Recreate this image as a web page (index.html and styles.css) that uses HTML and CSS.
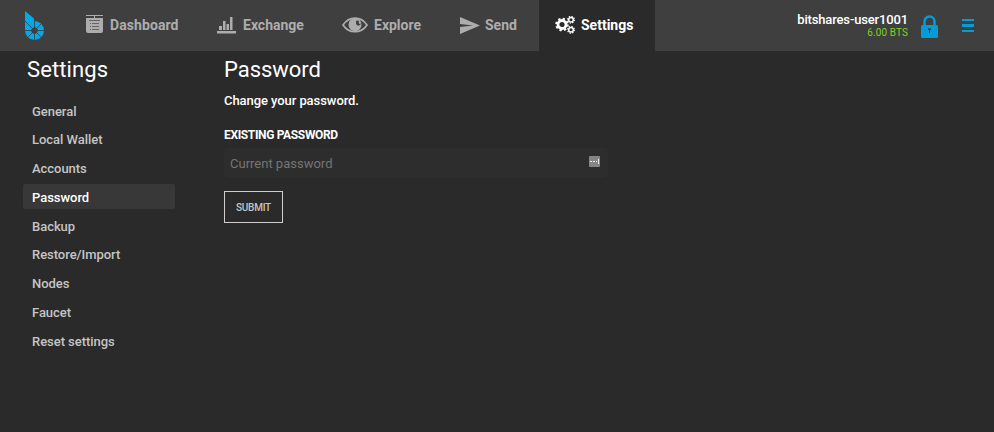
FILE: index.html
```html
<!DOCTYPE html>
<html lang="en">
<head>
<meta charset="utf-8">
<title>Settings</title>
<link rel="stylesheet" href="styles.css">
</head>
<body>
<header class="header">
  <a class="logo">
    <svg width="20" height="30" viewBox="0 0 20 30">
      <circle cx="9.500" cy="19.500" r="6.300" fill="none" stroke="#00a9e9" stroke-width="6.400"/>
      <path fill="#00a9e9" d="M0 0L9 7.500V16.500L7 17.500L0 18.500Z"/>
      <path d="M9.500 8V30M0 19.500H20M9.500 19.500L0 10M9.500 19.500L17 12M9.500 19.500L2 27M9.500 19.500L17 27" stroke="#3f3f3f" stroke-width=".8"/>
      <circle cx="9.500" cy="19.500" r="3" fill="#3f3f3f"/>
    </svg>
  </a>
  <nav class="nav">
    <a class="tab dashboard">
      <svg width="18" height="18" viewBox="0 0 18 18"><path fill="#adadad" d="M0 0H17V1H0ZM0 3H8V1H9V3H17V16Q17 18 15 18H2Q0 18 0 16Z"/><path d="M3 5.500H14M4 8.500H5M6 8.500H13M4 11.500H5M6 11.500H13M4 14.500H5M6 14.500H13" stroke="#656565"/></svg>
      <span>Dashboard</span>
    </a>
    <a class="tab exchange">
      <svg width="19" height="17" viewBox="0 0 19 17"><path fill="#adadad" d="M2 9H5V13H2ZM6 4H8.500V13H6ZM9.500 7H12V13H9.500ZM13 0H15.500V13H13ZM0 14H19V16.500H0Z"/></svg>
      <span>Exchange</span>
    </a>
    <a class="tab explore">
      <svg width="26" height="16" viewBox="0 0 26 16"><path d="M1 8C7-1.300 19-1.300 25 8C19 17 7 17 1 8Z" fill="none" stroke="#adadad" stroke-width="1.700"/><circle cx="13" cy="7.700" r="6.500" fill="#adadad"/><path d="M14.500 3.500Q13 6.500 15.500 8.500Q18.500 9 19 6.500L17.500 7L16.500 5.500L17.300 4Z" fill="#3f3f3f"/></svg>
      <span>Explore</span>
    </a>
    <a class="tab send">
      <svg width="20" height="17" viewBox="0 0 20 17"><path fill="#adadad" d="M0 0L20 8.500L0 17V10L13 8.500L0 7Z"/></svg>
      <span>Send</span>
    </a>
    <a class="tab settings">
      <svg width="20" height="18" viewBox="0 0 20 18" fill="none" stroke="#fff">
        <circle cx="7" cy="8.500" r="4" stroke-width="2.800"/><circle cx="7" cy="8.500" r="5.800" stroke-width="2" stroke-dasharray="2.300 2.255"/>
        <circle cx="16" cy="3.700" r="2.300" stroke-width="1.500"/><circle cx="16" cy="3.700" r="3.400" stroke-width="1.200" stroke-dasharray="1.335 1.335"/>
        <circle cx="16" cy="13.800" r="2.300" stroke-width="1.500"/><circle cx="16" cy="13.800" r="3.400" stroke-width="1.200" stroke-dasharray="1.335 1.335"/>
      </svg>
      <span>Settings</span>
    </a>
  </nav>
  <div class="account">
    <div class="account-name">bitshares-user1001</div>
    <div class="balance">6.00 BTS</div>
  </div>
  <svg class="lock" width="17" height="23" viewBox="0 0 17 23"><path d="M3.500 11V6.500A5 5 0 0 1 13.500 6.500V11" fill="none" stroke="#049cd7" stroke-width="2.500"/><rect y="10" width="17" height="13" rx="1.500" fill="#049cd7"/><path d="M7.200 13.200H9.800V15H9V18H8V15H7.200Z" fill="#303c42"/></svg>
  <svg class="menu-icon" width="12" height="14" viewBox="0 0 12 14"><path fill="#049cd7" d="M0 0H12V2H0ZM0 5H12V8H0ZM0 11H12V13H0Z"/></svg>
</header>
<main class="page">
  <aside class="sidebar">
    <h1 class="title">Settings</h1>
    <ul class="menu">
      <li>General</li>
      <li>Local Wallet</li>
      <li>Accounts</li>
      <li class="active">Password</li>
      <li>Backup</li>
      <li>Restore/Import</li>
      <li>Nodes</li>
      <li>Faucet</li>
      <li>Reset settings</li>
    </ul>
  </aside>
  <section class="content">
    <h2 class="title">Password</h2>
    <p class="intro">Change your password.</p>
    <label class="label" for="current">EXISTING PASSWORD</label>
    <div class="field">
      <input id="current" type="password" placeholder="Current password">
      <svg width="11" height="11" viewBox="0 0 11 11"><rect width="11" height="11" rx="1" fill="#858585"/><path d="M1 5H3V6H1ZM4 5H6V6H4ZM7 5H8V6H7ZM9 3H10V8H9Z" fill="#e8e8e8"/></svg>
    </div>
    <button class="submit">SUBMIT</button>
  </section>
</main>
</body>
</html>
```
FILE: styles.css
```css
* { box-sizing: border-box; }
body {
  margin: 0;
  height: 432px;
  overflow: hidden;
  background: #2a2a2a;
  color: #fff;
  font: 13px/20px Roboto, sans-serif;
}
svg { display: block; flex: none; }
.header {
  display: flex;
  align-items: flex-start;
  height: 51px;
  background: #3f3f3f;
}
.logo { width: 70px; padding: 11px 0 0 25px; }
.nav { display: flex; height: 51px; }
.tab {
  display: flex;
  align-items: center;
  height: 51px;
  padding: 0 0 1px 16px;
  color: #adadad;
  font-size: 14px;
  font-weight: 700;
  white-space: nowrap;
}
.dashboard { width: 131px; }
.dashboard svg { margin: -2px 6px 0 0; }
.dashboard span { letter-spacing: .08px; }
.exchange { width: 125px; }
.exchange svg { margin: 0 7px 0 0; }
.explore { width: 118px; }
.explore svg { margin: 0 6px 0 0; }
.send { width: 95px; }
.send svg { margin: 0 5px 0 0; }
.settings { width: 116px; background: #2a2a2a; color: #fff; }
.settings svg { margin: 0 6px 0 0; }
.account {
  width: 253px;
  padding-top: 11px;
  text-align: right;
}
.account-name {
  font-size: 13px;
  font-weight: 500;
  line-height: 17px;
  letter-spacing: -.15px;
}
.balance { color: #7ed321; font-size: 10px; line-height: 10px; letter-spacing: .1px; }
.lock { margin: 15px 0 0 13px; }
.menu-icon { margin: 19px 0 0 24px; }
.page { display: flex; }
.sidebar { width: 224px; padding: 4px 0 0 23px; }
.title {
  margin: 0;
  font-size: 22px;
  font-weight: 400;
  line-height: 30px;
}
.sidebar .title { padding-left: 4px; letter-spacing: .1px; }
.menu {
  margin: 12.55px 0 0;
  padding: 0;
  list-style: none;
}
.menu li {
  width: 152px;
  height: 25px;
  margin-bottom: 3.75px;
  padding-left: 9px;
  border-radius: 2px;
  color: #c5c5c5;
  font-weight: 500;
  line-height: 27px;
  letter-spacing: -.04px;
}
.menu .active { background: #383838; color: #fff; }
.content { width: 384px; padding-top: 4px; }
.content .title { letter-spacing: -.05px; }
.intro { margin: 6px 0 0; font-weight: 500; letter-spacing: -.07px; }
.label {
  display: block;
  margin-top: 14px;
  font-size: 12px;
  font-weight: 700;
  line-height: 20px;
  letter-spacing: -.35px;
}
.field {
  display: flex;
  align-items: center;
  height: 30px;
  margin-top: 3px;
  padding: 0 8px 0 6px;
  border-radius: 4px;
  background: #2d2d2d;
}
.field input {
  flex: 1;
  height: 30px;
  padding: 0;
  border: 0;
  outline: 0;
  background: transparent;
  color: #fff;
  font: 13px Roboto, sans-serif;
}
.field input::placeholder { color: #757575; }
.field svg { margin-top: -4px; }
.submit {
  display: block;
  width: 59px;
  height: 32px;
  margin-top: 13px;
  padding: 0;
  border: 1px solid #cfcfcf;
  background: transparent;
  color: #c5c5c5;
  font: 500 10px Roboto, sans-serif;
  letter-spacing: -.25px;
}
```
